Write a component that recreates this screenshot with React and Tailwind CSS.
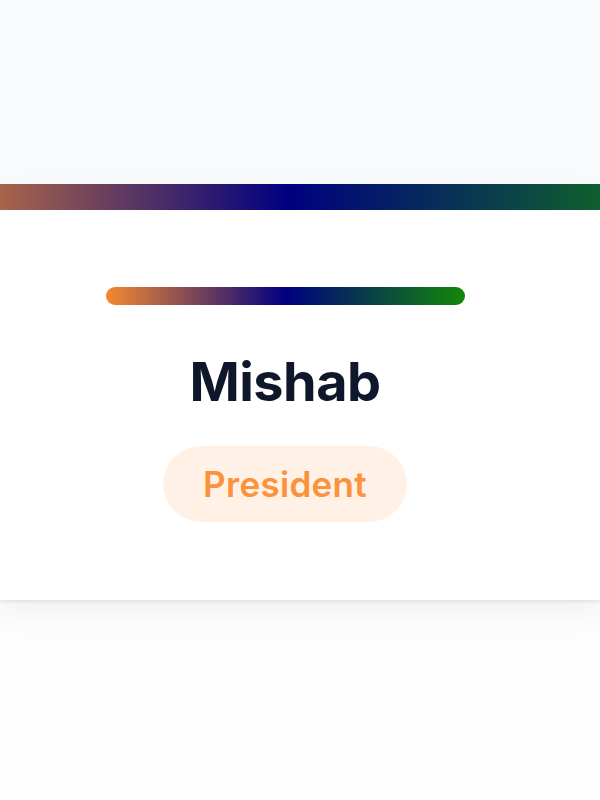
export default function App() {
  return (
    <div className="w-[600px] h-[800px] overflow-hidden bg-[#fdfdfd]" style={{ fontFamily: 'Inter, "Noto Sans", sans-serif' }}>
      <div className="h-[184px] bg-[#f9fafc]" />
      <div className="bg-white shadow-[0_2px_3px_rgba(0,0,0,0.07),0_10px_30px_rgba(0,0,0,0.06)]">
        <div className="h-[26px] bg-[linear-gradient(90deg,#a8644a,#000080_48%,#0f5f2f)]" />
        <div className="h-[390px] flex flex-col items-center pr-[30px] pt-[77px]">
          <div className="w-[359px] h-[18px] rounded-full bg-[linear-gradient(90deg,#f38a30,#000080_50%,#138808)]" />
          <div className="mt-[50px] text-[54px] leading-none font-bold text-[#0f172a] tracking-[-0.5px]">Mishab</div>
          <div className="mt-[37px] h-[76px] w-[244px] rounded-full bg-[#fff1e5] flex items-center justify-center text-[35px] font-semibold text-[#fb923c] tracking-[0.3px]">
            President
          </div>
        </div>
      </div>
    </div>
  );
}
